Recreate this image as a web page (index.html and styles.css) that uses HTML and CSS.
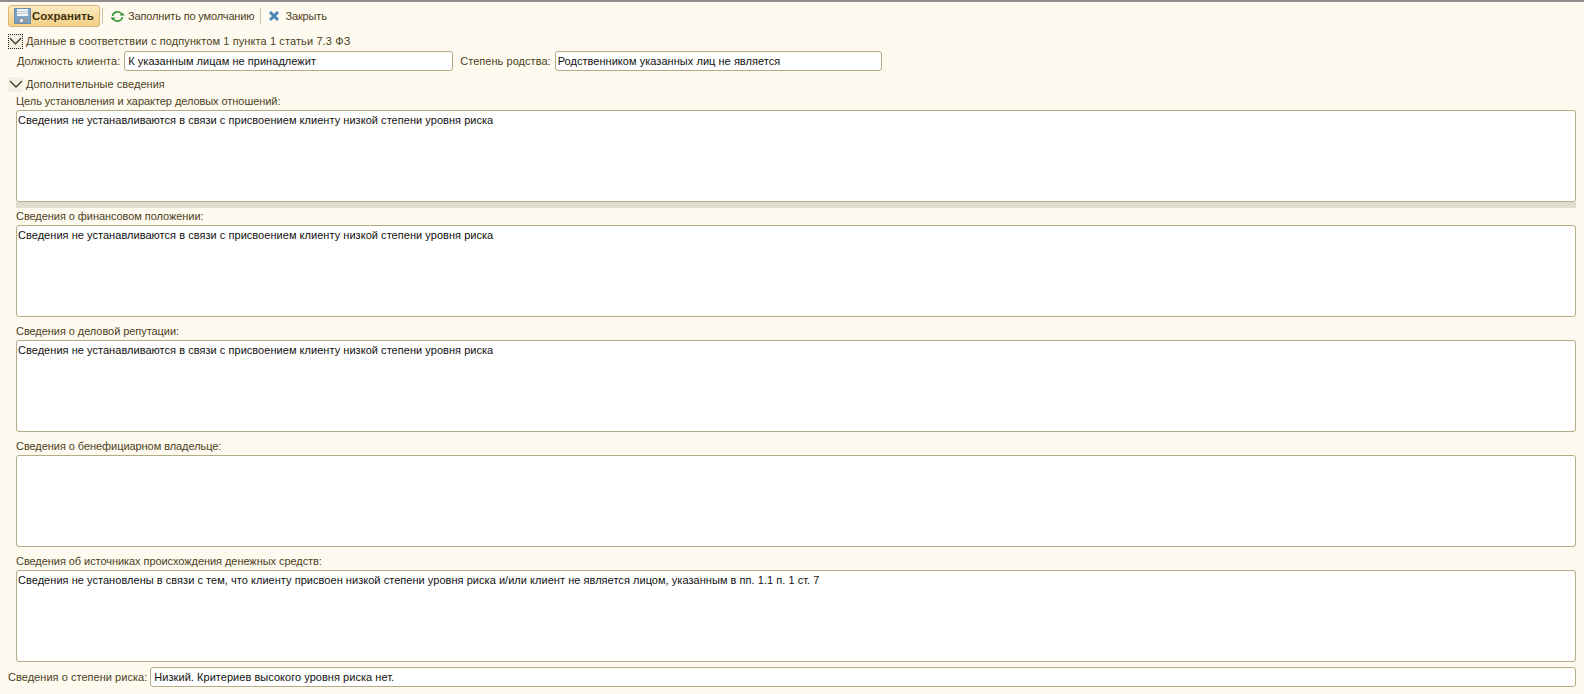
FILE: index.html
```html
<!DOCTYPE html>
<html lang="ru">
<head>
    <meta charset="UTF-8">
    <link rel="stylesheet" href="styles.css">
    <title>Сведения о клиенте</title>
</head>
<body>
    <div class="toolbar">
        <div class="save-btn">
            <svg width="17" height="16" viewBox="0 0 17 16" class="icon">
                <rect x="0.5" y="0.5" width="16" height="15" fill="#7fa3c4" stroke="#6a8fb0"/>
                <rect x="3" y="1" width="11" height="7" fill="#f2f4f6"/>
                <rect x="3" y="3" width="11" height="1" fill="#c3ccd4"/>
                <rect x="3" y="5" width="11" height="1" fill="#c3ccd4"/>
                <rect x="4" y="10" width="9" height="5" fill="#8c97a2"/>
                <rect x="6" y="11" width="3" height="3" fill="#e6eaee"/>
            </svg>
            <span>Сохранить</span>
        </div>
        <div class="sep"></div>
        <div class="tool">
            <svg width="15" height="13" viewBox="0 0 15 13" class="icon">
                <path d="M2.5 6a5 4.6 0 0 1 8.6-2.6" fill="none" stroke="#3f9a3a" stroke-width="1.7"/>
                <path d="M9.6 5.4h5l-2.5-3z" fill="#2f8a2e"/>
                <path d="M12.5 7a5 4.6 0 0 1-8.6 2.6" fill="none" stroke="#3f9a3a" stroke-width="1.7"/>
                <path d="M5.4 7.6h-5l2.5 3z" fill="#2f8a2e"/>
            </svg>
            <span>Заполнить по умолчанию</span>
        </div>
        <div class="sep"></div>
        <div class="tool close">
            <svg width="12" height="12" viewBox="0 0 12 12" class="icon">
                <path d="M2 2l8 8M10 2l-8 8" stroke="#4a86b8" stroke-width="3"/>
            </svg>
            <span>Закрыть</span>
        </div>
    </div>

    <div class="group-head first">
        <div class="toggle focused"><svg width="14" height="8" viewBox="0 0 14 8"><path d="M1 1l6 6 6-6" fill="none" stroke="#3a3a2a" stroke-width="1.3"/></svg></div>
        <span>Данные в соответствии с подпунктом 1 пункта 1 статьи 7.3 ФЗ</span>
    </div>
    <div class="field-row">
        <label class="lbl">Должность клиента:</label>
        <div class="input post">К указанным лицам не принадлежит</div>
        <label class="lbl lbl-rel">Степень родства:</label>
        <div class="input rel">Родственником указанных лиц не является</div>
    </div>

    <div class="group-head second">
        <div class="toggle"><svg width="14" height="8" viewBox="0 0 14 8"><path d="M1 1l6 6 6-6" fill="none" stroke="#3a3a2a" stroke-width="1.3"/></svg></div>
        <span>Дополнительные сведения</span>
    </div>

    <div class="area-block">
        <div class="area-label">Цель установления и характер деловых отношений:</div>
        <div class="area">Сведения не устанавливаются в связи с присвоением клиенту низкой степени уровня риска</div>
        <div class="splitter"></div>
        <div class="area-label">Сведения о финансовом положении:</div>
        <div class="area">Сведения не устанавливаются в связи с присвоением клиенту низкой степени уровня риска</div>
        <div class="area-label next">Сведения о деловой репутации:</div>
        <div class="area">Сведения не устанавливаются в связи с присвоением клиенту низкой степени уровня риска</div>
        <div class="area-label next">Сведения о бенефициарном владельце:</div>
        <div class="area"></div>
        <div class="area-label next">Сведения об источниках происхождения денежных средств:</div>
        <div class="area">Сведения не установлены в связи с тем, что клиенту присвоен низкой степени уровня риска и/или клиент не является лицом, указанным в пп. 1.1 п. 1 ст. 7</div>
    </div>

    <div class="risk-row">
        <label class="lbl">Сведения о степени риска:</label>
        <div class="input risk">Низкий. Критериев высокого уровня риска нет.</div>
    </div>
</body>
</html>
```

FILE: styles.css
```css
*{
    box-sizing: border-box;
}

:root{
    --bg-color: #fffaef;
    --border-color: #b3ab83;
    --label-color: #4b3f22;
}

body{
    margin: 0;
    height: 694px;
    overflow: hidden;
    background-color: var(--bg-color);
    border-top: 2px solid #8f8f8f;
    font-family: "Liberation Sans", Arial, sans-serif;
    font-size: 11px;
    letter-spacing: 0.04px;
    color: var(--label-color);
}

.toolbar{
    display: flex;
    align-items: center;
    height: 22px;
    margin-top: 3px;
    padding-left: 8px;
}

.icon{
    flex: none;
}

.save-btn{
    display: flex;
    align-items: center;
    gap: 1px;
    width: 92px;
    height: 22px;
    padding-left: 5px;
    border: 1px solid #d6b670;
    border-radius: 3px;
    background: linear-gradient(#fbeac0, #f7dca0 55%, #f3cf85);
    font-weight: bold;
    color: #3d3212;
    font-size: 11.5px;
}

.sep{
    width: 1px;
    height: 16px;
    margin: 0 7px 0 2px;
    background-color: #c9c3a5;
}

.tool{
    display: flex;
    align-items: center;
    gap: 3px;
    margin-right: 4px;
    letter-spacing: -0.14px;
}

.tool.close{
    gap: 5px;
}

.group-head{
    display: flex;
    align-items: center;
    gap: 3px;
    height: 16px;
    margin-top: 6px;
    padding-left: 8px;
}

.group-head.first{
    letter-spacing: 0.11px;
}

.group-head.second{
    margin-top: 5px;
}

.toggle{
    display: flex;
    align-items: center;
    justify-content: center;
    width: 15px;
    height: 15px;
    background-color: #f3efe2;
}

.toggle.focused{
    border: 1px dotted #222;
}

.field-row{
    display: flex;
    align-items: center;
    height: 20px;
    margin-top: 2px;
    padding-left: 17px;
}

.lbl{
    white-space: nowrap;
}

.input{
    height: 20px;
    line-height: 18px;
    padding-left: 3px;
    border: 1px solid var(--border-color);
    border-radius: 3px;
    background-color: #fff;
    color: #111;
    white-space: nowrap;
}

.post{
    width: 329px;
    margin-left: 4px;
}

.lbl-rel{
    margin-left: 7px;
}

.rel{
    width: 327px;
    margin-left: 4px;
    padding-left: 2px;
}

.area-block{
    margin-top: 1px;
    padding: 0 8px 0 16px;
}

.area-label{
    height: 17px;
    line-height: 17px;
    letter-spacing: -0.06px;
}

.area-label.next{
    height: 23px;
    padding-top: 6px;
}

.area{
    height: 92px;
    padding: 2px 1px;
    border: 1px solid var(--border-color);
    border-radius: 3px;
    background-color: #fff;
    color: #111;
    line-height: 14px;
}

.splitter{
    height: 6px;
    background-color: #e0dccd;
}

.risk-row{
    display: flex;
    align-items: center;
    margin-top: 5px;
    padding: 0 8px;
}

.risk{
    flex: 1;
    margin-left: 3px;
}
```
